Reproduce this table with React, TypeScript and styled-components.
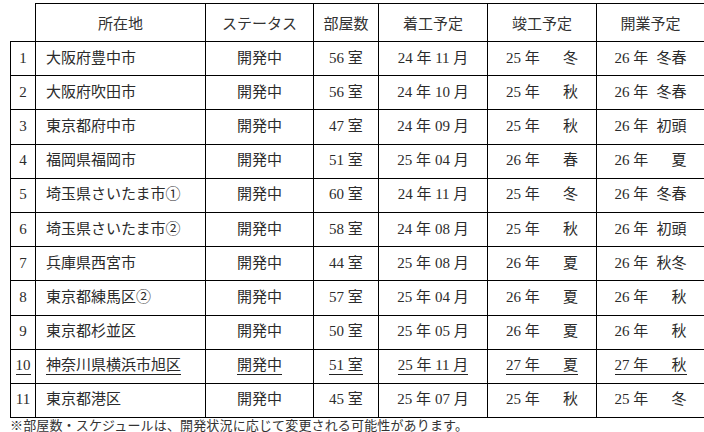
import React from 'react';
import styled, { createGlobalStyle } from 'styled-components';

const GlobalStyle = createGlobalStyle`
    html, body {
        margin: 0;
        padding: 0;
        background: #ffffff;
    }
    body {
        font-family: "Liberation Serif", "Noto Sans CJK JP", serif;
        font-size: 15px;
        color: #2b2b2b;
    }
`;

const Page = styled.div`
    width: 704px;
    height: 432px;
    padding: 3px 0 0 10px;
    box-sizing: border-box;
    overflow: hidden;
`;

const Table = styled.table`
    width: 694px;
    table-layout: fixed;
    border-collapse: collapse;
`;

const HeadRow = styled.tr`
    height: 38px;
`;

const BodyRow = styled.tr`
    height: 34.2px;
`;

const HeadCell = styled.th<{ $blank?: boolean }>`
    padding: 0;
    font-weight: normal;
    text-align: center;
    vertical-align: middle;
    color: #333333;
    border: 1px solid #000000;
    border-top: ${(p) => (p.$blank ? 'none' : '1px solid #000000')};
    border-left: ${(p) => (p.$blank ? 'none' : '1px solid #000000')};
`;

const Cell = styled.td<{ $align?: 'left' | 'center' }>`
    padding: 0 0 0 ${(p) => (p.$align === 'left' ? '10px' : '0')};
    text-align: ${(p) => p.$align || 'center'};
    vertical-align: middle;
    white-space: nowrap;
    border: 1px solid #000000;
`;

const Value = styled.span<{ $underline?: boolean; $width?: number }>`
    display: inline-flex;
    justify-content: space-between;
    align-items: baseline;
    width: ${(p) => (p.$width ? `${p.$width}px` : 'auto')};
    line-height: 16px;
    padding-bottom: 1px;
    border-bottom: 1px solid ${(p) => (p.$underline ? '#222222' : 'transparent')};
`;

const Note = styled.div`
    margin-top: 1px;
    font-size: 13px;
    line-height: 13px;
    letter-spacing: 0.15px;
    color: #333333;
    white-space: nowrap;
`;

interface IRow {
    name: string;
    rooms: number;
    startYear: string;
    startMonth: string;
    endYear: string;
    endSeason: string;
    openYear: string;
    openSeason: string;
}

const rows: IRow[] = [
    { name: '大阪府豊中市', rooms: 56, startYear: '24', startMonth: '11', endYear: '25', endSeason: '冬', openYear: '26', openSeason: '冬春' },
    { name: '大阪府吹田市', rooms: 56, startYear: '24', startMonth: '10', endYear: '25', endSeason: '秋', openYear: '26', openSeason: '冬春' },
    { name: '東京都府中市', rooms: 47, startYear: '24', startMonth: '09', endYear: '25', endSeason: '秋', openYear: '26', openSeason: '初頭' },
    { name: '福岡県福岡市', rooms: 51, startYear: '25', startMonth: '04', endYear: '26', endSeason: '春', openYear: '26', openSeason: '夏' },
    { name: '埼玉県さいたま市①', rooms: 60, startYear: '24', startMonth: '11', endYear: '25', endSeason: '冬', openYear: '26', openSeason: '冬春' },
    { name: '埼玉県さいたま市②', rooms: 58, startYear: '24', startMonth: '08', endYear: '25', endSeason: '秋', openYear: '26', openSeason: '初頭' },
    { name: '兵庫県西宮市', rooms: 44, startYear: '25', startMonth: '08', endYear: '26', endSeason: '夏', openYear: '26', openSeason: '秋冬' },
    { name: '東京都練馬区②', rooms: 57, startYear: '25', startMonth: '04', endYear: '26', endSeason: '夏', openYear: '26', openSeason: '秋' },
    { name: '東京都杉並区', rooms: 50, startYear: '25', startMonth: '05', endYear: '26', endSeason: '夏', openYear: '26', openSeason: '秋' },
    { name: '神奈川県横浜市旭区', rooms: 51, startYear: '25', startMonth: '11', endYear: '27', endSeason: '夏', openYear: '27', openSeason: '秋' },
    { name: '東京都港区', rooms: 45, startYear: '25', startMonth: '07', endYear: '25', endSeason: '秋', openYear: '25', openSeason: '冬' },
];

// 10番目の物件だけ下線付き
const underlined = (index: number) => index === 9;

const App = () => (
    <>
        <GlobalStyle />
        <Page>
            <Table>
                <colgroup>
                    <col style={{ width: 25 }} />
                    <col style={{ width: 170 }} />
                    <col style={{ width: 108 }} />
                    <col style={{ width: 65 }} />
                    <col style={{ width: 109 }} />
                    <col style={{ width: 109 }} />
                    <col style={{ width: 108 }} />
                </colgroup>
                <thead>
                    <HeadRow>
                        <HeadCell $blank />
                        <HeadCell>所在地</HeadCell>
                        <HeadCell>ステータス</HeadCell>
                        <HeadCell>部屋数</HeadCell>
                        <HeadCell>着工予定</HeadCell>
                        <HeadCell>竣工予定</HeadCell>
                        <HeadCell>開業予定</HeadCell>
                    </HeadRow>
                </thead>
                <tbody>
                    {rows.map((row, i) => {
                        const u = underlined(i);
                        return (
                            <BodyRow key={i}>
                                <Cell><Value $underline={u}>{i + 1}</Value></Cell>
                                <Cell $align="left"><Value $underline={u}>{row.name}</Value></Cell>
                                <Cell><Value $underline={u}>開発中</Value></Cell>
                                <Cell><Value $underline={u}>{row.rooms} 室</Value></Cell>
                                <Cell>
                                    <Value $underline={u}>{row.startYear} 年 {row.startMonth} 月</Value>
                                </Cell>
                                <Cell>
                                    <Value $underline={u} $width={72}>
                                        <span>{row.endYear} 年</span>
                                        <span>{row.endSeason}</span>
                                    </Value>
                                </Cell>
                                <Cell>
                                    <Value $underline={u} $width={72}>
                                        <span>{row.openYear} 年</span>
                                        <span>{row.openSeason}</span>
                                    </Value>
                                </Cell>
                            </BodyRow>
                        );
                    })}
                </tbody>
            </Table>
            <Note>※部屋数・スケジュールは、開発状況に応じて変更される可能性があります。</Note>
        </Page>
    </>
);

export default App;
